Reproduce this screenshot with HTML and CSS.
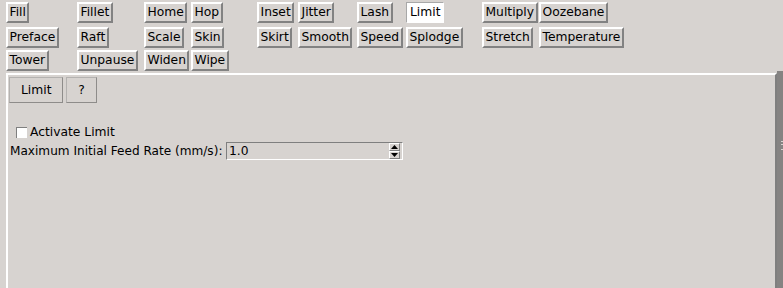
FILE: index.html
```html
<!DOCTYPE html>
<html>
<head>
<meta charset="utf-8">
<link rel="stylesheet" href="styles.css">
</head>
<body>
<div class="window">
  <div class="toolbar">
    <span class="tb c1 r1">Fill</span>
    <span class="tb c2 r1">Fillet</span>
    <span class="tb c3 r1">Home</span>
    <span class="tb c4 r1">Hop</span>
    <span class="tb c5 r1">Inset</span>
    <span class="tb c6 r1">Jitter</span>
    <span class="tb c7 r1">Lash</span>
    <span class="tb c8 r1 active">Limit</span>
    <span class="tb c9 r1">Multiply</span>
    <span class="tb c10 r1">Oozebane</span>

    <span class="tb c1 r2">Preface</span>
    <span class="tb c2 r2">Raft</span>
    <span class="tb c3 r2">Scale</span>
    <span class="tb c4 r2">Skin</span>
    <span class="tb c5 r2">Skirt</span>
    <span class="tb c6 r2">Smooth</span>
    <span class="tb c7 r2">Speed</span>
    <span class="tb c8 r2">Splodge</span>
    <span class="tb c9 r2">Stretch</span>
    <span class="tb c10 r2">Temperature</span>

    <span class="tb c1 r3">Tower</span>
    <span class="tb c2 r3">Unpause</span>
    <span class="tb c3 r3">Widen</span>
    <span class="tb c4 r3">Wipe</span>
  </div>
  <div class="lower">
    <div class="panel">
      <div class="actions">
        <span class="btn">Limit</span>
        <span class="btn">?</span>
      </div>
      <label class="check"><span class="box"></span>Activate Limit</label>
      <div class="field">
        <span class="label">Maximum Initial Feed Rate (mm/s):</span>
        <span class="spin">
          <span class="value">1.0</span>
          <span class="arrows">
            <span class="arrow up"><svg width="7" height="4" viewBox="0 0 7 4"><polygon points="0,4 7,4 3.5,0" fill="#000"/></svg></span>
            <span class="arrow down"><svg width="7" height="4" viewBox="0 0 7 4"><polygon points="0,0 7,0 3.5,4" fill="#000"/></svg></span>
          </span>
        </span>
      </div>
    </div>
    <div class="sash"><span class="grip"></span></div>
  </div>
</div>
</body>
</html>
```

FILE: styles.css
```css
html, body {
  margin: 0;
  padding: 0;
  background: #d7d3d0;
}
body {
  width: 783px;
  height: 288px;
  overflow: hidden;
  font-family: "DejaVu Sans", sans-serif;
  font-size: 12.3px;
  color: #000;
}
.window {
  display: flex;
  flex-direction: column;
  height: 288px;
}
.toolbar {
  display: grid;
  grid-template-columns: 71px 67px 47px 66px 41px 59px 49px 76px 57px 100px;
  grid-template-rows: 21px 20px 21px;
  row-gap: 3.5px;
  padding: 2px 0 0 6px;
  height: 71px;
  box-sizing: border-box;
}
.tb {
  justify-self: start;
  box-sizing: border-box;
  height: 21px;
  line-height: 17px;
  padding: 0 1.5px;
  border: 2px solid;
  border-color: #fff #828282 #828282 #fff;
  background: #d7d3d0;
  white-space: nowrap;
}
.tb.active {
  background: #fff;
  border: 1px solid;
  border-color: #a8a8a8 #fff #fff #a8a8a8;
  padding: 1px 3px;
}
.c1 { grid-column: 1; } .c2 { grid-column: 2; } .c3 { grid-column: 3; }
.c4 { grid-column: 4; } .c5 { grid-column: 5; } .c6 { grid-column: 6; }
.c7 { grid-column: 7; } .c8 { grid-column: 8; } .c9 { grid-column: 9; }
.c10 { grid-column: 10; }
.r1 { grid-row: 1; } .r2 { grid-row: 2; } .r3 { grid-row: 3; }

.lower {
  flex: 1;
  display: flex;
  margin-top: 2px;
}
.panel {
  flex: 1;
  margin-left: 6px;
  border-top: 2px solid #fff;
  border-left: 2px solid #fff;
  border-right: 2px solid #7f7f7f;
  padding: 2px 0 0 0;
}
.actions {
  display: flex;
  gap: 3px;
  padding-left: 1px;
}
.btn {
  box-sizing: border-box;
  height: 26px;
  line-height: 24px;
  padding: 0 11px;
  border: 1px solid;
  border-color: #b4b2b0 #8e8c8a #8e8c8a #b4b2b0;
  background: #d7d3d0;
}
.actions .btn:first-child { width: 54px; text-align: center; }
.actions .btn:last-child { width: 31px; text-align: center; padding: 0; }
.check {
  display: flex;
  align-items: center;
  margin-top: 21px;
  padding-left: 8px;
  height: 16px;
}
.box {
  width: 10px;
  height: 10px;
  background: #fff;
  border-top: 1px solid #7f7f7f;
  border-left: 1px solid #7f7f7f;
  margin-right: 3px;
}
.field {
  display: flex;
  align-items: center;
  margin-top: 2px;
  padding-left: 2px;
  height: 18px;
}
.label {
  width: 216px;
  font-size: 12.1px;
  white-space: nowrap;
}
.spin {
  display: flex;
  box-sizing: border-box;
  width: 177px;
  height: 18px;
  border: 1px solid;
  border-color: #7f7f7f #fff #fff #7f7f7f;
  background: #d7d3d0;
  padding-right: 1px;
}
.value {
  flex: 1;
  padding-left: 2px;
  line-height: 16px;
}
.arrows {
  display: flex;
  flex-direction: column;
  width: 11px;
  margin-right: 1px;
}
.arrow {
  box-sizing: border-box;
  flex: 1;
  display: flex;
  align-items: center;
  justify-content: center;
  border: 1px solid;
  border-color: #fff #7f7f7f #7f7f7f #fff;
}
.arrow svg { display: block; }
.sash {
  width: 6px;
  margin-top: -2px;
  background: #858382;
  display: flex;
  align-items: flex-start;
  justify-content: flex-end;
}
.grip {
  width: 2px;
  height: 7px;
  margin-top: 70px;
  border-top: 1px solid #d7d3d0;
  border-bottom: 1px solid #d7d3d0;
  background: linear-gradient(#858382 2px, #d7d3d0 2px, #d7d3d0 3px, #858382 3px);
}
```
